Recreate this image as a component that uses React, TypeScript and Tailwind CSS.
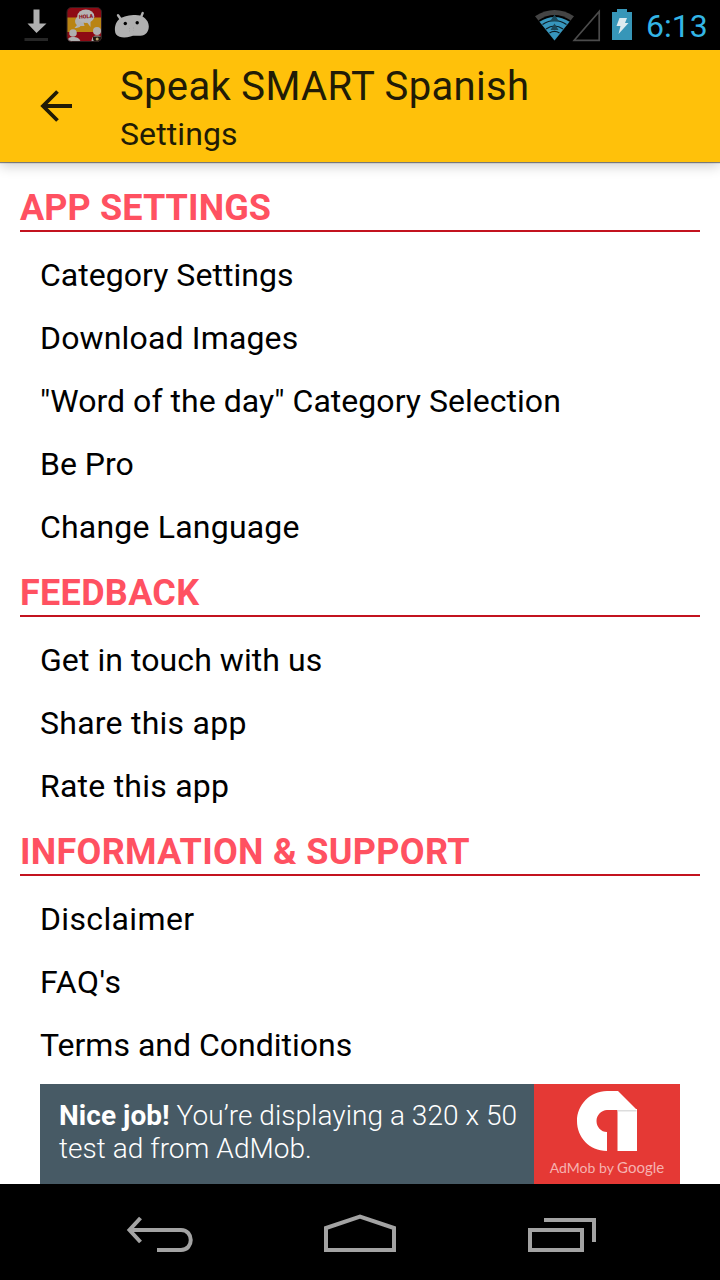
const sections = [
  {
    title: 'APP SETTINGS',
    track: 'tracking-[0.1px]',
    items: [
      { label: 'Category Settings', track: 'tracking-[0.03px]' },
      { label: 'Download Images', track: 'tracking-[0.16px]' },
      { label: '"Word of the day" Category Selection', track: 'tracking-[0.03px]' },
      { label: 'Be Pro', track: 'tracking-[0px]' },
      { label: 'Change Language', track: 'tracking-[0.2px]' },
    ],
  },
  {
    title: 'FEEDBACK',
    track: 'tracking-[0.3px]',
    items: [
      { label: 'Get in touch with us', track: 'tracking-[0.07px]' },
      { label: 'Share this app', track: 'tracking-[0.25px]' },
      { label: 'Rate this app', track: 'tracking-[0.23px]' },
    ],
  },
  {
    title: 'INFORMATION & SUPPORT',
    track: 'tracking-[0.3px]',
    items: [
      { label: 'Disclaimer', track: 'tracking-[0.35px]' },
      { label: "FAQ's", track: 'tracking-[0.6px]' },
      { label: 'Terms and Conditions', track: 'tracking-[0px]' },
    ],
  },
];

function NotificationIcons() {
  return (
    <svg width="160" height="50" viewBox="0 0 160 50">
      <path d="M33.500 9.500h6v14h7L36.500 33 27.500 23.500h6z" fill="#b0b0b0" />
      <rect x="24.500" y="38" width="23.500" height="3" fill="#262626" />
      <clipPath id="appIcon">
        <rect x="67" y="7.500" width="34.500" height="34" rx="4.500" />
      </clipPath>
      <g clipPath="url(#appIcon)">
        <rect x="66" y="7" width="36" height="35" fill="#8e0a14" />
        <rect x="66" y="17.500" width="36" height="14.500" fill="#b98413" />
        <path d="M77 17c-3 3-2 7 0 8l-2.500 3c3 0 5-.5 6-2h4l-2-8z" fill="#b0b0b0" />
        <ellipse cx="85.800" cy="16.300" rx="8.500" ry="6.800" fill="#b5b5b5" />
        <path d="M86 21l4.500 6v-6z" fill="#b5b5b5" />
        <circle cx="73" cy="33" r="3.800" fill="#b0b0b0" />
        <path d="M67.500 42c0-4 2-5 5.500-5s7 1 7.500 5z" fill="#b0b0b0" />
        <circle cx="97" cy="31" r="4" fill="#b0b0b0" />
        <path d="M91.500 42c0-5 2-6.500 5.500-6.500s5 1 5 6.500z" fill="#b0b0b0" />
        <path d="M93 36.500h8v2.500c0 2-2 3-4 3s-4-1-4-3z" fill="#20180f" />
        <circle cx="97.200" cy="39" r="1.500" fill="#b9a66c" />
      </g>
      <rect x="67" y="7.500" width="34.500" height="34" rx="4.500" fill="none" stroke="#302021" />
      <text x="85.900" y="18.300" textAnchor="middle" fontSize="5.400" fontWeight="900" fill="#8e0a14" transform="rotate(-3 86 16)">
        HOLA
      </text>
      <path d="M118 15.300l3.500 5M142.700 13l-2.500 6" stroke="#b0b0b0" strokeWidth="2.400" strokeLinecap="round" />
      <path d="M115 31c-.5-5 1-9.500 5-12.500 4-2.600 15-4.500 20-3 5.500 2 8.800 6 8.800 11 0 5-3 9-8.300 9.300-4 .3-6-.5-10 .6-4 1.400-8 1.500-11 .3-3-1-4.300-3-4.500-5.700z" fill="#b0b0b0" />
      <circle cx="125.300" cy="23.500" r="1.700" fill="#000" />
      <circle cx="137.200" cy="22.700" r="1.700" fill="#000" />
      <path d="M129.500 28v4M133.500 27.500v3" stroke="#9c9c9c" strokeWidth=".7" strokeDasharray="1 1.500" />
    </svg>
  );
}

function SystemIcons() {
  return (
    <svg width="105" height="50" viewBox="530 0 105 50">
      <path d="M535 16.300Q554.500 3.500 574 16.300L554.500 40.500z" fill="#444" />
      <path d="M538.500 20.300Q554.500 9.500 570.500 20.300L554.500 40.500z" fill="#000" />
      <path d="M539.500 21.800Q554.500 12 569.500 21.800L554.500 40.500z" fill="#3796bd" />
      <path d="M542.500 24.500Q554.500 16.500 566.500 24.500M546 29Q554.500 23 563 29M549.500 33Q554.500 29.800 559.500 33" fill="none" stroke="#0b1d26" strokeWidth="1.200" />
      <path d="M554.500 14.500l4.500 7h-9zM554.500 23.500l4 6.500h-8z" fill="#1b495b" />
      <path d="M574.200 40.300L599.200 11.500v28.800z" fill="none" stroke="#4b4b4b" strokeWidth="1.700" />
      <path d="M617 9h10v3h5v28h-20V12h5z" fill="#3796b8" />
      <path d="M619.500 18h7.500l-2 5h3.500l-10 11 2-8h-4z" fill="#dcebf0" />
    </svg>
  );
}

export default function App() {
  return (
    <div className="flex h-[1280px] w-[720px] flex-col overflow-hidden bg-white font-['Roboto',sans-serif]">
      <header className="flex h-[50px] shrink-0 items-center justify-between bg-black">
        <NotificationIcons />
        <div className="flex items-center pr-[12px]">
          <SystemIcons />
          <span className="ml-[11px] w-[62px] whitespace-nowrap pt-[1px] text-[32px] leading-[50px] text-[#33b5e5]">6:13</span>
        </div>
      </header>

      <div className="z-10 flex h-[112px] shrink-0 bg-[#ffc10a] shadow-[0_1px_1px_rgba(0,0,0,0.45),0_4px_12px_rgba(0,0,0,0.2)]">
        <button className="flex w-[120px] items-center pl-[39px]" aria-label="Back">
          <svg width="34" height="34" viewBox="0 0 34 34" fill="none" stroke="#211b06" strokeWidth="3.800">
            <path d="M33 17H4M18.500 2.500L4 17l14.500 14.500" />
          </svg>
        </button>
        <div className="flex flex-col whitespace-nowrap text-[#211b06]">
          <h1 className="pt-[13px] text-[40px] leading-[48px] tracking-[0.33px]">Speak SMART Spanish</h1>
          <h2 className="pt-[3px] text-[32px] leading-[40px] tracking-[0.1px]">Settings</h2>
        </div>
      </div>

      <main className="flex grow flex-col pt-[11px]">
        {sections.map((s) => (
          <section key={s.title} className="px-[20px]">
            <h3 className={`mb-[11px] flex h-[59px] items-end border-b-2 border-[#c3131f] pb-px text-[36px] font-bold leading-[42px] text-[#ff5161] ${s.track}`}>
              {s.title}
            </h3>
            <ul className="pl-[20px]">
              {s.items.map((item) => (
                <li key={item.label} className={`flex h-[63px] items-center whitespace-nowrap text-[32px] text-black ${item.track}`}>
                  {item.label}
                </li>
              ))}
            </ul>
          </section>
        ))}
        <aside className="mx-[40px] mt-[8px] flex h-[100px] shrink-0">
          <p className="grow whitespace-nowrap bg-[#475a65] pl-[19px] pt-[15px] text-[28px] font-light leading-[33px] tracking-[0.05px] text-white">
            <b className="font-bold">Nice job!</b> You’re displaying a 320 x 50
            <br />
            test ad from AdMob.
          </p>
          <div className="flex w-[146px] flex-col items-center bg-[#e53935]">
            <svg className="mt-[7px]" width="60" height="61" viewBox="0 0 60 61">
              <path d="M30 0H41L60 19H30c-5.500 0-10.500 5-10.500 11s4.500 11 10.500 11v19C12 60 0 46 0 30S13 0 30 0z" fill="#fff" />
              <path d="M40.500 18H60v42H40.500z" fill="#fff" />
              <path d="M40.500 19H59.500v1.500H40.500z" fill="#ddd" />
            </svg>
            <div className="mt-[6px] whitespace-nowrap font-['Lato',sans-serif] text-[14px] leading-[18px] text-[#f6b2b0]">
              AdMob by <span className="text-[15px]">Google</span>
            </div>
          </div>
        </aside>
      </main>

      <nav className="h-[96px] shrink-0 bg-black">
        <svg width="720" height="96" viewBox="0 1184 720 96" fill="none" stroke="#a3a3a3" strokeWidth="4">
          <path d="M129 1230H181C194 1230 194 1250 181 1250H157" />
          <path d="M140.500 1218L129.500 1230l11 12" />
          <path d="M326 1250V1228L360 1216.500L394 1228V1250z" />
          <path d="M530 1230h52v20h-52zM544 1220h50v22" />
        </svg>
      </nav>
    </div>
  );
}
